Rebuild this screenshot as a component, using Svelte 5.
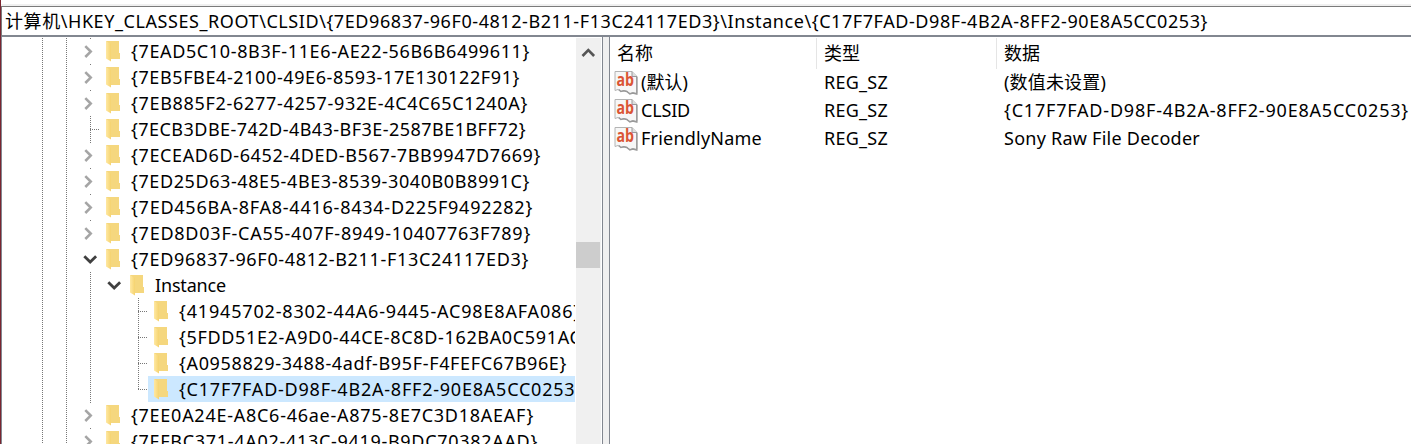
<script>
  const root = [
    ['{7EAD5C10-8B3F-11E6-AE22-56B6B6499611}', 0, 'closed', 399],
    ['{7EB5FBE4-2100-49E6-8593-17E130122F91}', 0, 'closed', 389],
    ['{7EB885F2-6277-4257-932E-4C4C65C1240A}', 0, 'closed', 397],
    ['{7ECB3DBE-742D-4B43-BF3E-2587BE1BFF72}', 0, 'leaf', 395],
    ['{7ECEAD6D-6452-4DED-B567-7BB9947D7669}', 0, 'closed', 410],
    ['{7ED25D63-48E5-4BE3-8539-3040B0B8991C}', 0, 'closed', 399],
    ['{7ED456BA-8FA8-4416-8434-D225F9492282}', 0, 'closed', 402],
    ['{7ED8D03F-CA55-407F-8949-10407763F789}', 0, 'closed', 400],
    ['{7ED96837-96F0-4812-B211-F13C24117ED3}', 0, 'open', 398],
    ['Instance', 1, 'open', 71],
    ['{41945702-8302-44A6-9445-AC98E8AFA086}', 2, 'leaf', 402],
    ['{5FDD51E2-A9D0-44CE-8C8D-162BA0C591AC}', 2, 'leaf', 410],
    ['{A0958829-3488-4adf-B95F-F4FEFC67B96E}', 2, 'leaf', 388],
    ['{C17F7FAD-D98F-4B2A-8FF2-90E8A5CC0253}', 2, 'last', 404],
    ['{7EE0A24E-A8C6-46ae-A875-8E7C3D18AEAF}', 0, 'closed', 403],
    ['{7EFBC371-4A02-413C-9419-B9DC70382AAD}', 0, 'closed', 407]
  ];
  const rows = root.map(([name, depth, state, width]) => ({ name, depth, state, width }));
  const values = [
    { name: '(默认)', nw: 47, data: '(数值未设置)', dw: 102 },
    { name: 'CLSID', nw: 49, data: '{C17F7FAD-D98F-4B2A-8FF2-90E8A5CC0253}', dw: 405 },
    { name: 'FriendlyName', nw: 121, data: 'Sony Raw File Decoder', dw: 196 }
  ];
  // Spreads a label's letters over its column width.
  function fit(node, width) {
    const n = [...node.textContent].length;
    const natural = node.getBoundingClientRect().width;
    node.style.letterSpacing = `${(width - natural) / n}px`;
  }
</script>

<div class="window">
  <div class="top"></div>
  <div class="address"><span use:fit={1203}>计算机\HKEY_CLASSES_ROOT\CLSID\{'{'}7ED96837-96F0-4812-B211-F13C24117ED3}\Instance\{'{'}C17F7FAD-D98F-4B2A-8FF2-90E8A5CC0253}</span></div>
  <div class="body">
    <div class="tree">
      {#each rows as r}
        <div class="row">
          <i class="guide"></i>
          <i class="guide"></i>
          {#if r.depth > 0}<i class="guide"></i>{/if}
          {#if r.depth > 1}<i class="gap"></i>{/if}
          <i class="cell {r.state}" class:nested={r.depth === 1}>
            {#if r.state === 'closed'}
              <svg width="24" height="26"><path d="M6.3 8.2l5.4 5.4-5.4 5.4" fill="none" stroke="#a5a5a5" stroke-width="2.6" /></svg>
            {:else if r.state === 'open'}
              <svg width="24" height="26"><path d="M5.3 10.3l5.9 5.8 5.9-5.8" fill="none" stroke="#404040" stroke-width="2.8" /></svg>
            {/if}
          </i>
          <div class="label" class:selected={r.state === 'last'}>
            <svg class="folder" width="16" height="22" viewBox="0 0 16 22">
              <defs><linearGradient id="fold"><stop offset="0" stop-color="#ffe8a2" /><stop offset="1" stop-color="#f5d36f" /></linearGradient></defs>
              <path d="M1 1h13v12h1v6H5z" fill="#f5d77e" />
              <path d="M1 1l5 3v17.5l-5-3z" fill="url(#fold)" />
            </svg>
            <span use:fit={r.width}>{r.name}</span>
          </div>
        </div>
      {/each}
    </div>
    <div class="scroll">
      <svg width="24" height="26"><path d="M6.5 18l5.8-6 5.8 6" fill="none" stroke="#555" stroke-width="2.6" /></svg>
      <div class="thumb"></div>
    </div>
    <div class="splitter"></div>
    <div class="list">
      <div class="head"><b>名称</b><b>类型</b><b>数据</b></div>
      {#each values as v}
        <div class="value">
          <div class="name">
            <svg width="25" height="25" viewBox="0 0 25 25">
              <path d="M1 1.5h17l5 5V23.5l-4-1-3 1-3-2-3-1-3 1-3-2-3 1z" fill="#f7f7f7" stroke="#b4b4b4" />
              <path d="M22.8 7v17l-4-1-3 1-3-2.5-3-.8-3 .8-2-2" fill="none" stroke="#999" stroke-width="1.4" />
              <path d="M18 1.5v5h5" fill="#ddd" stroke="#999" />
              <text x="2.4" y="16.3" textLength="17.5" lengthAdjust="spacingAndGlyphs">ab</text>
            </svg>
            <span use:fit={v.nw}>{v.name}</span>
          </div>
          <div class="type"><span use:fit={64}>REG_SZ</span></div>
          <div><span use:fit={v.dw}>{v.data}</span></div>
        </div>
      {/each}
    </div>
  </div>
</div>

<style>
  :global(body) { overflow: hidden; background: #fff; }
  .window { box-sizing: border-box; width: 1411px; height: 444px; display: flex; flex-direction: column; border-left: 1px solid #7a2530; font: 18px/26px "Noto Sans", "Noto Sans CJK SC", sans-serif; color: #000; overflow: hidden; }
  span { white-space: pre; flex: none; display: inline-block; }
  .top { height: 2px; margin-top: 4px; background: #f0f0f0; flex: none; }
  .address { height: 28px; flex: none; border: solid #7b7b7b; border-width: 1px 0 2px 1px; border-bottom-color: #828790; padding-left: 3px; line-height: 28px; }
  .body { display: flex; flex: 1; min-height: 0; }
  .tree { width: 574px; padding-top: 1px; overflow: hidden; border-left: 1px solid #828790; flex: none; box-sizing: border-box; margin-right: 1px; }
  .row { height: 26px; display: flex; padding-left: 40px; }
  .guide, .gap, .cell { width: 24px; height: 26px; flex: none; display: block; }
  .guide, .leaf { background: repeating-linear-gradient(#777 0 1px, transparent 1px 2px) 0 0 / 1px 26px no-repeat; }
  .cell { position: relative; width: 22px; }
  .cell svg { display: block; margin-left: -11px; }
  .leaf, .last { background: repeating-linear-gradient(#777 0 1px, transparent 1px 2px) 0 0 / 1px 26px no-repeat, repeating-linear-gradient(90deg, #777 0 1px, transparent 1px 2px) 0 13px / 10px 1px no-repeat; }
  .last { background-size: 1px 14px, 10px 1px; }
  .closed { background: linear-gradient(#777, #777) 0 0 / 1px 1px no-repeat; }
  .label { display: flex; flex: 1; min-width: 0; margin-left: -12px; }
  .folder { margin: 2px 10px 0 5px; flex: none; }
  .selected { background: #cce8ff; }
  .scroll { width: 25px; background: #f0f0f0; margin-top: 1px; margin-right: 1px; flex: none; }
  .scroll svg { display: block; }
  .thumb { height: 26px; width: 24px; background: #cdcdcd; margin-top: 178px; }
  .splitter { width: 6px; border: solid #828790; border-width: 0 1px; background: #f0f0f0; flex: none; }
  .list { flex: 1; padding-top: 1px; }
  .head { display: grid; grid-template-columns: 207px 180px 1fr; height: 30px; line-height: 31px; }
  .head b { font-weight: 400; padding-left: 7px; border-right: 1px solid #e5e5e5; }
  .head b:last-child { border: 0; }
  .value { display: grid; grid-template-columns: 214px 180px 1fr; height: 28px; line-height: 28px; }
  .name { display: flex; padding-left: 4px; }
  .name svg { margin: 2px 2px 0 0; }
  text { font: bold 17px "Open Sans", sans-serif; fill: #db5535; }
</style>
